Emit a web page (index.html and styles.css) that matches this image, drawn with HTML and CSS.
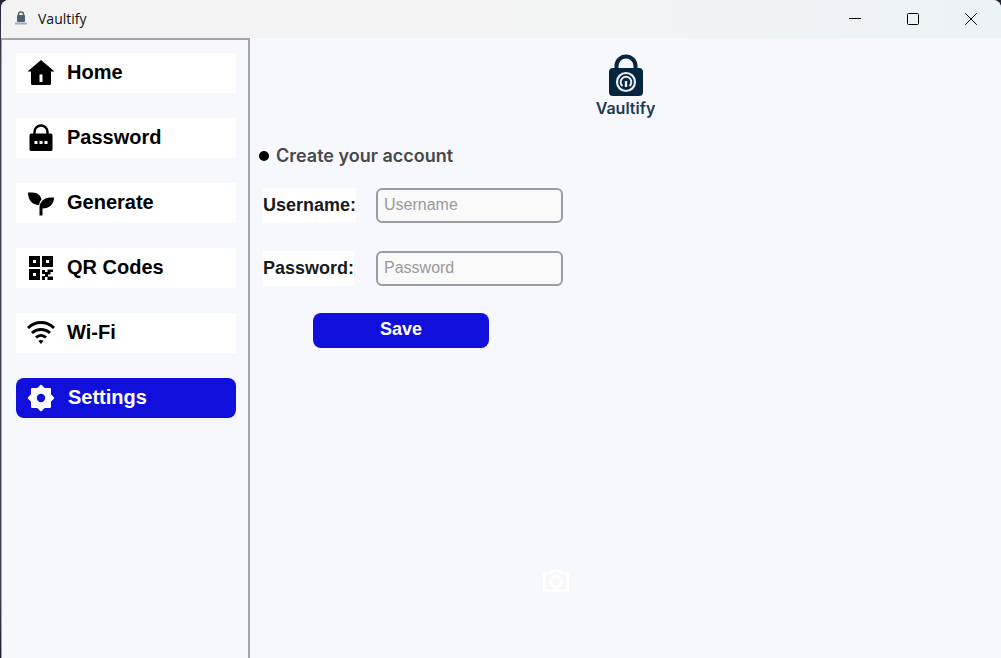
FILE: index.html
```html
<!DOCTYPE html>
<html lang="en">
<head>
<meta charset="utf-8">
<title>Vaultify</title>
<link rel="stylesheet" href="styles.css">
</head>
<body>
<div class="window">
  <header class="titlebar">
    <svg class="app-icon" viewBox="0 0 14 16" aria-hidden="true"><path d="M4.500 6V3.500a2.500 2.500 0 0 1 5 0v2.500" fill="none" stroke="#53646f" stroke-width="1.500"/><rect x="3" y="4" width="8" height="7" rx="1" fill="#4b6170"/><path d="M1 12.500h12" stroke="#a3acb3" stroke-width="2"/></svg>
    <span class="title">Vaultify</span>
    <div class="controls">
      <button type="button" class="control" aria-label="Minimize"><svg viewBox="0 0 14 14"><path d="M1 6.500h12"/></svg></button>
      <button type="button" class="control" aria-label="Maximize"><svg viewBox="0 0 14 14"><rect x="1.500" y="1.500" width="11" height="11" rx="1"/></svg></button>
      <button type="button" class="control" aria-label="Close"><svg viewBox="0 0 14 14"><path d="M1.200 1.200l11.600 11.600M12.800 1.200L1.200 12.800"/></svg></button>
    </div>
  </header>
  <div class="body">
    <nav class="sidebar">
      <button type="button" class="nav-item"><svg class="icon" viewBox="0 0 28 28"><path fill-rule="evenodd" d="M14 1L27.500 12.500H24V24.500q0 1.500-1.500 1.500h-17Q4 26 4 24.500V12.500H.5zM12.500 15.500v7.500h3v-7.500z"/></svg><span>Home</span></button>
      <button type="button" class="nav-item"><svg class="icon" viewBox="0 0 28 28"><path d="M7.500 11V8a6.500 6.500 0 0 1 13 0v3" fill="none" stroke="currentColor" stroke-width="2.400"/><path fill-rule="evenodd" d="M4 9.500h20q1.500 0 1.500 1.500v14.500q0 1.500-1.500 1.500H4q-1.500 0-1.500-1.500v-14.500Q2.500 9.500 4 9.500zM7.500 17v3h3v-3zM12.500 17v3h3v-3zM17.500 17v3h3v-3z"/></svg><span>Password</span></button>
      <button type="button" class="nav-item"><svg class="icon" viewBox="0 0 28 28"><path d="M1 3.500h4c6 0 9 3.500 9.500 7-1.300 1.500-2 2.800-2.300 5.500C5 16 1 11 1 3.500z"/><path d="M27 8.500h-3.500C17 8.500 12.500 13 12.500 19v7.500h3V19.500C22.500 19.500 27 15 27 8.500z"/></svg><span>Generate</span></button>
      <button type="button" class="nav-item"><svg class="icon" viewBox="0 0 28 28"><path fill-rule="evenodd" d="M2 2h11v11H2zM6 6v3h3V6zM15 2h11v11H15zM19 6v3h3V6zM2 15h11v11H2zM6 19v3h3v-3z"/><path d="M15 16h3v2h2.500v-2.500H26v2.500h-2.500v2.500H21v2h5V26h-5.500v-3H18v3h-3v-4h3v-2h-3z"/></svg><span>QR Codes</span></button>
      <button type="button" class="nav-item"><svg class="icon" viewBox="0 0 28 28"><g fill="none" stroke="currentColor" stroke-width="3"><path d="M1 9C8.500 1.800 19.500 1.800 27 9"/><path d="M5 14C10 9.200 18 9.200 23 14"/><path d="M9 18.500C12 15.700 16 15.700 19 18.500"/></g><path d="M11.500 22q2.500-2 5 0L14 25z"/></svg><span>Wi-Fi</span></button>
      <button type="button" class="nav-item active" aria-current="page"><svg class="icon" viewBox="0 0 28 28"><path fill-rule="evenodd" stroke="currentColor" stroke-width="2" stroke-linejoin="round" d="M14 1.800L17.200 5H23V10.800L26.200 14 23 17.200V23H17.200L14 26.200 10.800 23H5V17.200L1.800 14 5 10.800V5H10.800zM14 8.800a5.200 5.200 0 1 0 0 10.400 5.200 5.200 0 0 0 0-10.400z"/></svg><span>Settings</span></button>
    </nav>
    <main class="content">
      <div class="brand">
        <svg class="brand-icon" viewBox="0 0 34 44" aria-hidden="true"><path d="M7.500 17V12a9.500 9.500 0 0 1 19 0v5" fill="none" stroke="#06263f" stroke-width="4"/><rect y="14" width="34" height="28" rx="4" fill="#06263f"/><g fill="none" stroke="#e8eef5"><circle cx="17" cy="28" r="9" stroke-width="2.200"/><path d="M13.500 32a5.300 5.300 0 1 1 7 0" stroke-width="2"/><path d="M17 27v6" stroke-width="2.400"/></g></svg>
        <span class="brand-name">Vaultify</span>
      </div>
      <form class="account">
        <h1 class="heading">Create your account</h1>
        <div class="fields">
          <label for="username">Username:</label>
          <input id="username" type="text" placeholder="Username">
          <label for="password">Password:</label>
          <input id="password" type="password" placeholder="Password">
        </div>
        <button type="button" class="save">Save</button>
      </form>
      <svg class="camera" viewBox="0 0 26 24" aria-hidden="true"><path d="M1.500 4.500H8L10 2h6l2 2.500h6.500v17h-23z"/><circle cx="13" cy="12.500" r="5.500"/></svg>
    </main>
  </div>
</div>
</body>
</html>
```
FILE: styles.css
```css
* { box-sizing: border-box; }
body {
  margin: 0;
  background: linear-gradient(#262238, #464050 10%, #464050 90%, #1d1a2a);
  font-family: "Liberation Sans", Arial, sans-serif;
}
button { border: 0; padding: 0; font: inherit; color: inherit; cursor: pointer; }
.window {
  display: flex;
  flex-direction: column;
  min-height: 100vh;
  margin-left: 1px;
  border-radius: 8px 8px 0 0;
  overflow: hidden;
  background: #f6f8fe;
}
.titlebar {
  display: flex;
  align-items: center;
  height: 38px;
  padding: 0 1px 0 13px;
  background: linear-gradient(90deg, #f3f3f3 50%, #ebf3f6);
}
.app-icon { width: 14px; height: 16px; }
.title {
  margin-left: 10px;
  padding-bottom: 2px;
  font: 14px "Open Sans", "Noto Sans", sans-serif;
  color: #111;
}
.controls { display: flex; margin-left: auto; }
.control {
  display: grid;
  place-items: center;
  width: 58px;
  height: 38px;
  background: none;
}
.control svg { width: 14px; height: 14px; fill: none; stroke: #000; }
.body { display: flex; flex: 1; }
.sidebar {
  display: flex;
  flex-direction: column;
  gap: 25px;
  width: 249px;
  flex-shrink: 0;
  padding: 13px 12px 14px 14px;
  border: solid #a4a4aa;
  border-width: 2px 2px 0 1px;
}
.nav-item {
  display: flex;
  align-items: center;
  gap: 12px;
  height: 40px;
  padding-left: 11px;
  background: #fff;
  font-size: 20px;
  font-weight: bold;
  color: #000;
}
.nav-item span { padding-bottom: 2px; }
.nav-item.active { gap: 13px; border-radius: 8px; background: #110fdb; color: #fff; }
.icon { width: 28px; height: 28px; fill: currentColor; }
.content { flex: 1; display: flex; flex-direction: column; padding: 16px 0; }
.brand { display: flex; flex-direction: column; align-items: center; }
.brand-icon { width: 34px; height: 44px; }
.brand-name {
  font: 600 16px/20px Inter, sans-serif;
  color: #1d3a50;
}
.account { padding: 26px 0 0 13px; }
.heading {
  display: flex;
  align-items: center;
  gap: 7px;
  margin: 0 0 20px -4px;
  font: 600 18px/24px Inter, sans-serif;
  color: #484848;
}
.heading::before {
  content: "";
  width: 10px;
  height: 10px;
  border-radius: 50%;
  background: #000;
}
.fields {
  display: grid;
  grid-template-columns: 113px 187px;
  row-gap: 28px;
}
.fields label {
  justify-self: start;
  background: #fff;
  font-size: 18px;
  font-weight: bold;
  line-height: 34px;
  color: #1a1a1a;
}
.fields input {
  height: 35px;
  padding: 0 7px 2px 6px;
  border: 2px solid #979da2;
  border-radius: 6px;
  background: #f9f9fa;
  font: 16px "Liberation Sans", Arial, sans-serif;
}
.fields input::placeholder { color: #999; opacity: 1; }
.save {
  display: block;
  width: 176px;
  height: 35px;
  margin: 27px 0 0 50px;
  padding-bottom: 2px;
  border-radius: 8px;
  background: #110fdb;
  font-size: 18px;
  font-weight: bold;
  color: #fff;
}
.camera {
  width: 26px;
  height: 24px;
  margin: auto 0 49px 293px;
  fill: none;
  stroke: #fff;
  stroke-width: 3;
}
```
